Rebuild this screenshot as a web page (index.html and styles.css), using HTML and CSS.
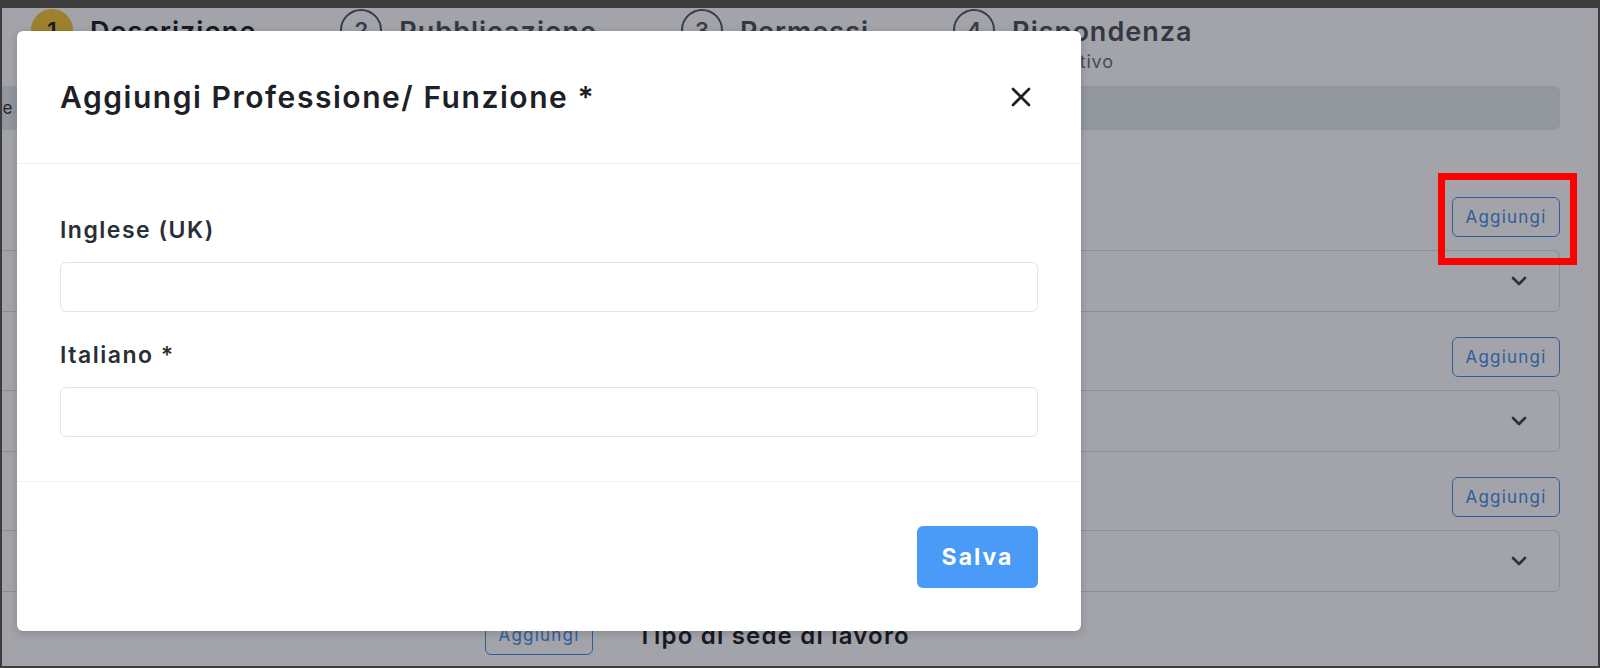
FILE: index.html
```html
<!DOCTYPE html>
<html lang="it">
<head>
    <meta charset="UTF-8">
    <meta name="viewport" content="width=device-width, initial-scale=1.0">
    <title>Nuova offerta - Descrizione</title>
    <link rel="stylesheet" href="styles.css">
</head>
<body>
    <div class="screen">
        <div class="page">
            <ol class="stepper">
                <li class="step done">
                    <span class="step-num">1</span>
                    <div class="step-text">
                        <span class="step-title">Descrizione</span>
                    </div>
                </li>
                <li class="step">
                    <span class="step-num">2</span>
                    <div class="step-text">
                        <span class="step-title">Pubblicazione</span>
                    </div>
                </li>
                <li class="step">
                    <span class="step-num">3</span>
                    <div class="step-text">
                        <span class="step-title">Permessi</span>
                    </div>
                </li>
                <li class="step">
                    <span class="step-num">4</span>
                    <div class="step-text">
                        <span class="step-title">Rispondenza</span>
                        <span class="step-sub">Facoltativo</span>
                    </div>
                </li>
            </ol>

            <div class="content">
                <div class="band">Note</div>

                <section class="field-block">
                    <div class="field-head">
                        <button type="button" class="btn-outline">Aggiungi</button>
                    </div>
                    <div class="select-box">
                        <svg class="chevron" viewBox="0 0 16 10" width="16" height="10"><path d="M2 2l6 6 6-6"/></svg>
                    </div>
                </section>

                <section class="field-block">
                    <div class="field-head">
                        <button type="button" class="btn-outline">Aggiungi</button>
                    </div>
                    <div class="select-box">
                        <svg class="chevron" viewBox="0 0 16 10" width="16" height="10"><path d="M2 2l6 6 6-6"/></svg>
                    </div>
                </section>

                <section class="field-block">
                    <div class="field-head">
                        <button type="button" class="btn-outline">Aggiungi</button>
                    </div>
                    <div class="select-box">
                        <svg class="chevron" viewBox="0 0 16 10" width="16" height="10"><path d="M2 2l6 6 6-6"/></svg>
                    </div>
                </section>

                <div class="extra-row">
                    <button type="button" class="btn-outline">Aggiungi</button>
                    <span class="extra-title">Tipo di sede di lavoro</span>
                </div>
            </div>
        </div>

        <div class="backdrop"></div>

        <div class="modal">
            <div class="modal-header">
                <h2 class="modal-title">Aggiungi Professione/ Funzione *</h2>
                <button type="button" class="modal-close" aria-label="Chiudi">
                    <svg viewBox="0 0 22 22" width="22" height="22"><path d="M3 3l16 16M19 3L3 19"/></svg>
                </button>
            </div>
            <div class="modal-body">
                <label class="form-label" for="name-en">Inglese (UK)</label>
                <input type="text" id="name-en" class="form-input">
                <label class="form-label spaced" for="name-it">Italiano *</label>
                <input type="text" id="name-it" class="form-input">
            </div>
            <div class="modal-footer">
                <button type="button" class="btn-primary">Salva</button>
            </div>
        </div>

        <div class="highlight"></div>
    </div>
</body>
</html>
```

FILE: styles.css
```css
* {
    box-sizing: border-box;
}
html, body {
    margin: 0;
    height: 100%;
}
body {
    background-color: #3d3d3d;
    padding: 8px 2px 2px 2px;
    font-family: Inter, "Noto Sans", sans-serif;
    color: #222;
}
.screen {
    position: relative;
    height: 658px;
    background-color: #fff;
    overflow: hidden;
}

/* page behind the dialog */
.stepper {
    list-style: none;
    margin: 0;
    padding: 1px 0 0 29px;
    display: flex;
    gap: 84px;
    height: 78px;
}
.step {
    display: flex;
    gap: 17px;
}
.step-num {
    width: 42px;
    height: 42px;
    border: 2px solid #555a63;
    border-radius: 50%;
    display: flex;
    align-items: center;
    justify-content: center;
    font-size: 22px;
    font-weight: 600;
    color: #555a63;
    flex: none;
}
.step.done .step-num {
    background-color: #f5c73a;
    border-color: #f5c73a;
    color: #222;
}
.step-text {
    display: flex;
    flex-direction: column;
    padding-top: 5px;
}
.step-title {
    font-size: 27px;
    line-height: 36px;
    font-weight: 600;
    letter-spacing: 1px;
    color: #4c525d;
}
.step.done .step-title {
    color: #1d2127;
}
.step-sub {
    font-size: 18px;
    line-height: 24px;
    letter-spacing: 0.8px;
    color: #6c7079;
}

.content {
    margin: 0 38px 0 -40px;
}
.band {
    height: 44px;
    background-color: #e6e8ec;
    border-radius: 0 6px 6px 0;
    padding-left: 12px;
    display: flex;
    align-items: center;
    font-size: 17px;
    color: #333;
    margin-bottom: 67px;
}
.field-block {
    margin-bottom: 25px;
}
.field-head {
    display: flex;
    justify-content: flex-end;
    align-items: center;
    height: 40px;
    margin-bottom: 13px;
}
.btn-outline {
    width: 108px;
    height: 40px;
    background: #fff;
    border: 1.5px solid #4a8ee8;
    border-radius: 6px;
    color: #4a8ee8;
    font-family: inherit;
    font-size: 17px;
    letter-spacing: 1.2px;
    cursor: pointer;
}
.select-box {
    height: 62px;
    border: 1px solid #d9dce1;
    border-radius: 6px;
    display: flex;
    align-items: center;
    justify-content: flex-end;
    padding-right: 32px;
}
.chevron {
    fill: none;
    stroke: #444;
    stroke-width: 2.6;
    stroke-linecap: round;
    stroke-linejoin: round;
}
.extra-row {
    display: flex;
    align-items: center;
    gap: 44px;
    margin-top: -2px;
    padding-left: 523px;
}
.extra-title {
    font-size: 24px;
    font-weight: 600;
    letter-spacing: 1.2px;
    color: #1d2127;
}

.backdrop {
    position: absolute;
    inset: 0;
    background-color: rgba(10, 16, 30, 0.38);
}

/* dialog */
.modal {
    position: absolute;
    left: 15px;
    top: 23px;
    width: 1064px;
    background-color: #fff;
    border-radius: 6px;
    box-shadow: 0 2px 8px rgba(0, 0, 0, 0.18);
}
.modal-header {
    height: 133px;
    padding: 0 43px;
    display: flex;
    align-items: center;
    justify-content: space-between;
    border-bottom: 1px solid #eef0f3;
}
.modal-title {
    margin: 0;
    font-size: 30px;
    font-weight: 600;
    letter-spacing: 1.55px;
    color: #1d2127;
}
.modal-close {
    width: 34px;
    height: 34px;
    padding: 0;
    border: none;
    background: none;
    display: flex;
    align-items: center;
    justify-content: center;
    cursor: pointer;
}
.modal-close svg {
    fill: none;
    stroke: #1d2127;
    stroke-width: 2.7;
    stroke-linecap: round;
}
.modal-body {
    padding: 51px 43px 44px;
    border-bottom: 1px solid #eef0f3;
}
.form-label {
    display: block;
    font-size: 23px;
    line-height: 30px;
    font-weight: 600;
    letter-spacing: 1.5px;
    color: #2a2e35;
    margin-bottom: 17px;
}
.form-label.spaced {
    margin-top: 28px;
}
.form-input {
    display: block;
    width: 100%;
    height: 50px;
    border: 1px solid #e2e5ea;
    border-radius: 6px;
    padding: 0 16px;
    font-family: inherit;
    font-size: 18px;
}
.modal-footer {
    padding: 44px 43px 43px;
    display: flex;
    justify-content: flex-end;
}
.btn-primary {
    width: 121px;
    height: 62px;
    border: none;
    border-radius: 6px;
    background-color: #4a9af7;
    color: #fff;
    font-family: inherit;
    font-size: 23px;
    font-weight: 700;
    letter-spacing: 2px;
    cursor: pointer;
}

/* red marker around the first add button */
.highlight {
    position: absolute;
    left: 1436px;
    top: 165px;
    width: 139px;
    height: 92px;
    border: 7px solid #ff0000;
}
```
